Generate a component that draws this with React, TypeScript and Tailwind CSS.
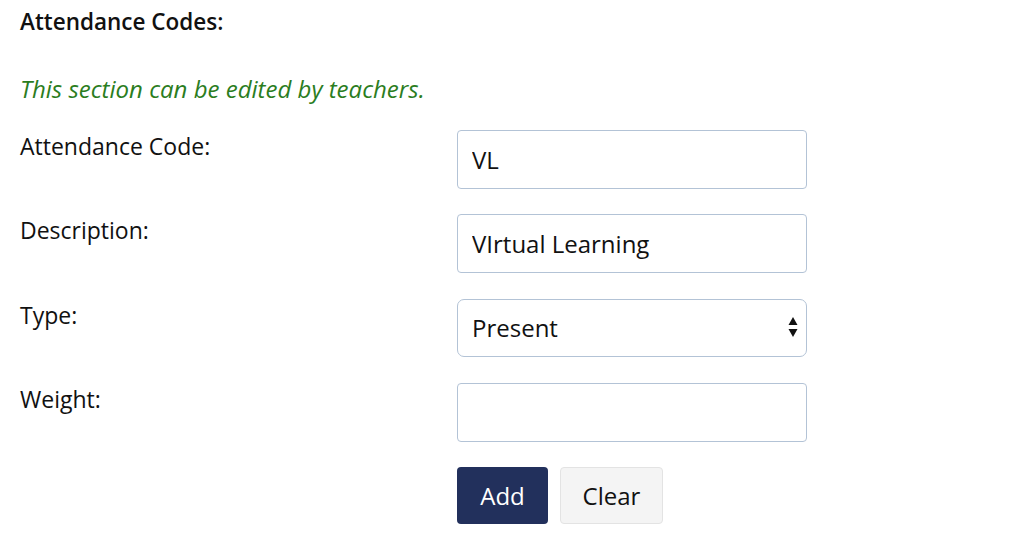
import * as React from 'react';

const font = { fontFamily: '"Open Sans", "Noto Sans", sans-serif' };

const Row: React.FC<{ label: string; className?: string; children: React.ReactNode }> = ({
  label,
  className,
  children,
}) => (
  <div className={`flex items-start ${className ?? ''}`}>
    <div className="w-[437px] shrink-0 pt-[1px] text-[23px] leading-[30px] text-[#111]">{label}</div>
    {children}
  </div>
);

const inputCls =
  'w-[350px] h-[59px] border border-[#b3c3d6] rounded-[4px] bg-white px-[14px] text-[24px] text-[#111] outline-none';

export default function App() {
  const [code, setCode] = React.useState('VL');
  const [desc, setDesc] = React.useState('VIrtual Learning');
  const [weight, setWeight] = React.useState('');

  return (
    <div className="min-h-[558px] w-[1024px] bg-white pl-[20px] pt-[7px]" style={font}>
      <div className="text-[22.5px] font-semibold leading-[30px] text-[#111]">Attendance Codes:</div>
      <div className="mt-[37px] text-[24px] italic leading-[30px] text-[#2b7d1e]">
        This section can be edited by teachers.
      </div>

      <div className="mt-[26px] flex flex-col">
        <Row label="Attendance Code:">
          <input className={inputCls} value={code} onChange={(e) => setCode(e.target.value)} style={font} />
        </Row>
        <Row label="Description:" className="mt-[25px]">
          <input className={inputCls} value={desc} onChange={(e) => setDesc(e.target.value)} style={font} />
        </Row>
        <Row label="Type:" className="mt-[26px]">
          <div className="relative">
            <select
              className="w-[350px] h-[58px] appearance-none rounded-[7px] border border-[#b3c3d6] bg-white px-[14px] text-[24px] text-[#111] outline-none"
              style={font}
              defaultValue="Present"
            >
              <option>Present</option>
              <option>Absent</option>
              <option>Tardy</option>
            </select>
            <svg
              className="pointer-events-none absolute right-[9px] top-[17px]"
              width="10"
              height="22"
              viewBox="0 0 10 22"
            >
              <path d="M5 1 L9.5 9 L0.5 9 Z" fill="#111" />
              <path d="M0.5 13 L9.5 13 L5 21 Z" fill="#111" />
            </svg>
          </div>
        </Row>
        <Row label="Weight:" className="mt-[26px]">
          <input className={inputCls} value={weight} onChange={(e) => setWeight(e.target.value)} style={font} />
        </Row>
      </div>

      <div className="ml-[437px] mt-[25px] flex gap-[12px]">
        <button className="h-[57px] w-[91px] rounded-[4px] bg-[#22305c] text-[24px] text-white" style={font}>
          Add
        </button>
        <button
          className="h-[57px] w-[103px] rounded-[4px] border border-[#e3e3e3] bg-[#f4f4f4] text-[24px] text-[#111]"
          style={font}
          onClick={() => {
            setCode('');
            setDesc('');
            setWeight('');
          }}
        >
          Clear
        </button>
      </div>
    </div>
  );
}
